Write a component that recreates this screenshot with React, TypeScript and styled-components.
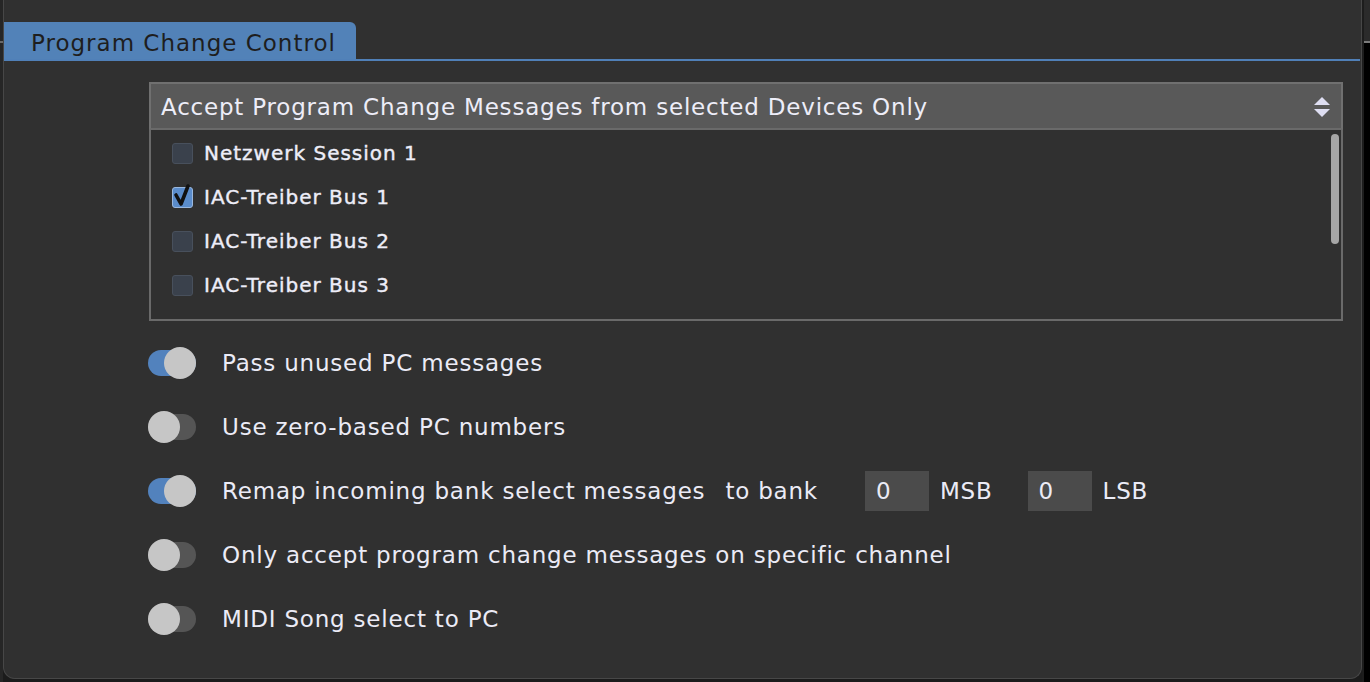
import React from 'react';
import styled, { createGlobalStyle } from 'styled-components';

const GlobalStyle = createGlobalStyle`
    html, body {
        margin: 0;
        padding: 0;
        background: #1b1b1b;
    }
    * {
        box-sizing: border-box;
    }
`;

interface Device {
    name: string;
    checked: boolean;
}

// the last row is scrolled mostly out of view, only its box peeks in
const devices: Device[] = [
    { name: 'Netzwerk Session 1', checked: false },
    { name: 'IAC-Treiber Bus 1', checked: true },
    { name: 'IAC-Treiber Bus 2', checked: false },
    { name: 'IAC-Treiber Bus 3', checked: false },
    { name: '', checked: false },
];

const UpDownArrows = () => (
    <svg width="18" height="22" viewBox="0 0 18 22">
        <polygon points="9,1 17,9 1,9" fill="#dedef2" />
        <polygon points="1,13 17,13 9,21" fill="#dedef2" />
    </svg>
);

const CheckMark = () => (
    <svg width="24" height="26" viewBox="0 0 24 26">
        <path
            d="M6 13 L11 22 L18 4"
            fill="none"
            stroke="#111"
            strokeWidth="3.6"
            strokeLinecap="round"
            strokeLinejoin="round"
        />
    </svg>
);

const App = () => {
    return (
        <>
            <GlobalStyle />
            <Screen>
                <LeftGutter />
                <Panel>
                    <TabBar>
                        <Tab>Program Change Control</Tab>
                    </TabBar>
                    <Body>
                        <Dropdown>
                            <span>
                                Accept Program Change Messages from selected
                                Devices Only
                            </span>
                            <UpDownArrows />
                        </Dropdown>
                        <DeviceList>
                            {devices.map((d, i) => (
                                <DeviceRow key={i}>
                                    <CheckBox checked={d.checked}>
                                        {d.checked && <CheckMark />}
                                    </CheckBox>
                                    {d.name && <DeviceName>{d.name}</DeviceName>}
                                </DeviceRow>
                            ))}
                            <ScrollThumb />
                        </DeviceList>
                        <Options>
                            <OptionRow>
                                <Toggle on={true}>
                                    <Knob on={true} />
                                </Toggle>
                                <Label>Pass unused PC messages</Label>
                            </OptionRow>
                            <OptionRow>
                                <Toggle on={false}>
                                    <Knob on={false} />
                                </Toggle>
                                <Label>Use zero-based PC numbers</Label>
                            </OptionRow>
                            <OptionRow>
                                <Toggle on={true}>
                                    <Knob on={true} />
                                </Toggle>
                                <Label>Remap incoming bank select messages</Label>
                                <Label gap={20}>to bank</Label>
                                <NumberBox gap={47}>0</NumberBox>
                                <Label gap={11}>MSB</Label>
                                <NumberBox gap={35}>0</NumberBox>
                                <Label gap={11}>LSB</Label>
                            </OptionRow>
                            <OptionRow>
                                <Toggle on={false}>
                                    <Knob on={false} />
                                </Toggle>
                                <Label>
                                    Only accept program change messages on
                                    specific channel
                                </Label>
                            </OptionRow>
                            <OptionRow>
                                <Toggle on={false}>
                                    <Knob on={false} />
                                </Toggle>
                                <Label>MIDI Song select to PC</Label>
                            </OptionRow>
                        </Options>
                    </Body>
                </Panel>
                <RightGutter />
            </Screen>
        </>
    );
};

const Screen = styled.div`
    width: 1370px;
    height: 682px;
    display: flex;
    background: #1b1b1b;
    font-family: 'DejaVu Sans', 'Liberation Sans', sans-serif;
    overflow: hidden;
`;

const LeftGutter = styled.div`
    width: 3px;
    height: 682px;
    background: #262626;
    position: relative;
    &::after {
        content: '';
        position: absolute;
        top: 41px;
        left: 0;
        width: 3px;
        height: 2px;
        background: #6a6a6a;
    }
`;

const RightGutter = styled.div`
    flex: 1;
    background: #000;
    border-left: 2px solid #1d1d1d;
    position: relative;
    &::before {
        content: '';
        position: absolute;
        top: 0;
        left: 0;
        right: 0;
        height: 41px;
        background: #2b2b2b;
    }
    &::after {
        content: '';
        position: absolute;
        top: 41px;
        left: 0;
        right: 0;
        height: 2px;
        background: #7a7a7a;
    }
`;

const Panel = styled.div`
    width: 1359px;
    height: 679px;
    background: #303030;
    border: 1px solid #474747;
    border-top: none;
    border-radius: 0 0 12px 12px;
    display: flex;
    flex-direction: column;
`;

const TabBar = styled.div`
    padding-top: 22px;
    border-bottom: 2px solid #5080b8;
    margin-right: 1px;
    display: flex;
`;

const Tab = styled.div`
    width: 352px;
    height: 37px;
    background: #5282b8;
    border-top-right-radius: 6px;
    color: #1e1e1e;
    font-size: 23px;
    letter-spacing: 1px;
    line-height: 42px;
    padding-left: 27px;
    white-space: nowrap;
`;

const Body = styled.div`
    padding: 21px 0 0 145px;
    display: flex;
    flex-direction: column;
`;

const Dropdown = styled.div`
    width: 1194px;
    height: 48px;
    background: #595959;
    border: 2px solid #707070;
    border-bottom-color: #6a6a6a;
    display: flex;
    align-items: center;
    justify-content: space-between;
    padding: 1px 10px 0 10px;
    color: #ededf8;
    font-size: 23px;
    letter-spacing: 0.8px;
    white-space: nowrap;
`;

const DeviceList = styled.div`
    width: 1194px;
    height: 191px;
    border: 2px solid #6a6a6a;
    border-top: none;
    overflow: hidden;
    position: relative;
    padding-top: 1px;
`;

const DeviceRow = styled.div`
    height: 44px;
    display: flex;
    align-items: center;
    padding-left: 21px;
`;

const CheckBox = styled.div<{ checked: boolean }>`
    width: 21px;
    height: 21px;
    border-radius: 3px;
    background: ${(p) => (p.checked ? '#5a8ccb' : '#3a414c')};
    border: 1px solid ${(p) => (p.checked ? '#9ab8de' : '#48505c')};
    position: relative;
    flex-shrink: 0;
    svg {
        position: absolute;
        left: -3px;
        top: -6px;
    }
`;

const DeviceName = styled.span`
    margin-left: 11px;
    color: #ededf8;
    font-size: 20px;
    letter-spacing: 1px;
    -webkit-text-stroke: 0.4px #ededf8;
    white-space: nowrap;
`;

const ScrollThumb = styled.div`
    position: absolute;
    right: 2px;
    top: 4px;
    width: 8px;
    height: 110px;
    border-radius: 4px;
    background: #a6a6a6;
`;

const Options = styled.div`
    margin-top: 10px;
    margin-left: -1px;
    display: flex;
    flex-direction: column;
`;

const OptionRow = styled.div`
    height: 64px;
    display: flex;
    align-items: center;
`;

const Toggle = styled.div<{ on: boolean }>`
    width: 48px;
    height: 26px;
    border-radius: 13px;
    background: ${(p) => (p.on ? '#5282bd' : '#555555')};
    position: relative;
    flex-shrink: 0;
`;

const Knob = styled.div<{ on: boolean }>`
    position: absolute;
    top: -3px;
    left: ${(p) => (p.on ? '16px' : '0')};
    width: 32px;
    height: 32px;
    border-radius: 50%;
    background: #c6c6c6;
`;

const Label = styled.span<{ gap?: number }>`
    margin-left: ${(p) => (p.gap !== undefined ? p.gap : 26)}px;
    color: #ebebf6;
    font-size: 23px;
    letter-spacing: 0.8px;
    white-space: nowrap;
`;

const NumberBox = styled.div<{ gap: number }>`
    margin-left: ${(p) => p.gap}px;
    width: 64px;
    height: 40px;
    background: #4b4b4b;
    color: #ebebf6;
    font-size: 23px;
    line-height: 40px;
    padding-left: 11px;
`;

export default App;
